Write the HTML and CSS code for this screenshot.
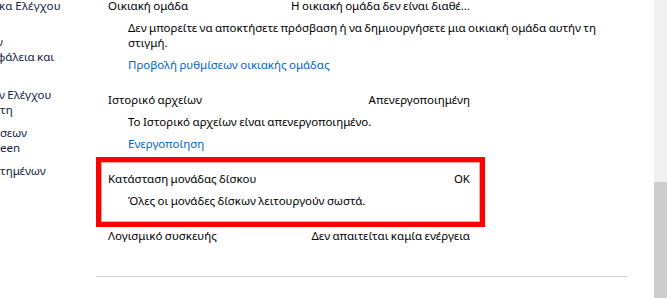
FILE: index.html
```html
<!DOCTYPE html>
<html lang="el">
<head>
    <meta charset="UTF-8">
    <meta name="viewport" content="width=device-width, initial-scale=1.0">
    <title>Ασφάλεια και Συντήρηση</title>
    <link rel="stylesheet" href="styles.css">
</head>
<body>
    <div class="page">
        <!-- αριστερό πλαίσιο (κομμένο) -->
        <nav class="sidebar">
            <a class="nav-link nav-home">κα Ελέγχου</a>
            <a class="nav-link nav-tall"><span class="cut3">ν</span><span class="cut3">φάλεια και</span></a>
            <a class="nav-link"><span class="cut1">ν Ελέγχου</span><span>τη</span></a>
            <a class="nav-link"><span>σεων</span><span>een</span></a>
            <a class="nav-link"><span>τημένων</span></a>
        </nav>

        <main class="content">
            <section class="item">
                <div class="item-head">
                    <span>Οικιακή ομάδα</span>
                    <span>Η οικιακή ομάδα δεν είναι διαθέ...</span>
                </div>
                <p class="item-desc">Δεν μπορείτε να αποκτήσετε πρόσβαση ή να δημιουργήσετε μια οικιακή ομάδα αυτήν τη<br>στιγμή.</p>
                <a class="item-link">Προβολή ρυθμίσεων οικιακής ομάδας</a>
            </section>

            <section class="item">
                <div class="item-head">
                    <span>Ιστορικό αρχείων</span>
                    <span>Απενεργοποιημένη</span>
                </div>
                <p class="item-desc">Το Ιστορικό αρχείων είναι απενεργοποιημένο.</p>
                <a class="item-link">Ενεργοποίηση</a>
            </section>

            <section class="item highlight">
                <div class="item-head">
                    <span>Κατάσταση μονάδας δίσκου</span>
                    <span>OK</span>
                </div>
                <p class="item-desc">Όλες οι μονάδες δίσκων λειτουργούν σωστά.</p>
            </section>

            <section class="item">
                <div class="item-head">
                    <span>Λογισμικό συσκευής</span>
                    <span>Δεν απαιτείται καμία ενέργεια</span>
                </div>
            </section>

            <hr class="divider">
        </main>

        <div class="scrollbar">
            <div class="scroll-track"></div>
            <div class="scroll-thumb"></div>
        </div>
    </div>
</body>
</html>
```

FILE: styles.css
```css
body {
    margin: 0;
    background-color: #fff;
    font-family: "Noto Sans", "Open Sans", sans-serif;
    font-size: 11.5px;
    word-spacing: -0.6px;
    line-height: 15px;
    color: #000;
}
.page {
    display: flex;
    height: 298px;
    overflow: hidden;
}

/* αριστερό πλαίσιο */
.sidebar {
    width: 96px;
    flex-shrink: 0;
    overflow: hidden;
    margin-top: -2px;
    color: #12223f;
}
.nav-link {
    display: flex;
    flex-direction: column;
    white-space: nowrap;
    margin-bottom: 8px;
}
.nav-home {
    margin-bottom: 21px;
    margin-left: -1px;
    letter-spacing: 0.2px;
}
.nav-tall {
    margin-bottom: 23px;
}
.cut3 {
    margin-left: -3px;
}
.cut1 {
    margin-left: -1px;
}

/* κύριο περιεχόμενο */
.content {
    flex: 1;
    margin-top: -2px;
    padding-right: 26px;
}
.item {
    width: 362px;
    margin-left: 12px;
}
.item + .item {
    margin-top: 20px;
}
.item-head {
    display: flex;
    justify-content: space-between;
    white-space: nowrap;
}
.item-desc {
    margin: 7px 0 0;
    padding-left: 20px;
    white-space: nowrap;
}
.item-link {
    display: block;
    margin-top: 7px;
    padding-left: 20px;
    color: #0066cc;
    cursor: pointer;
}

/* κόκκινο πλαίσιο σήμανσης */
.highlight {
    position: relative;
}
.highlight::after {
    content: "";
    position: absolute;
    top: -14px;
    bottom: -19px;
    left: -12px;
    right: -15px;
    border: 5px solid #ff0000;
    box-shadow: inset 0 0 0 1px #f7a8a8;
}

.divider {
    margin: 33px 0 0;
    border: none;
    border-top: 1px solid #d4d4d4;
}

/* γραμμή κύλισης */
.scrollbar {
    width: 13px;
    flex-shrink: 0;
    display: flex;
    flex-direction: column;
}
.scroll-track {
    height: 182px;
    background-color: #f0f0f0;
}
.scroll-thumb {
    flex: 1;
    background-color: #cdcdcd;
}
```
